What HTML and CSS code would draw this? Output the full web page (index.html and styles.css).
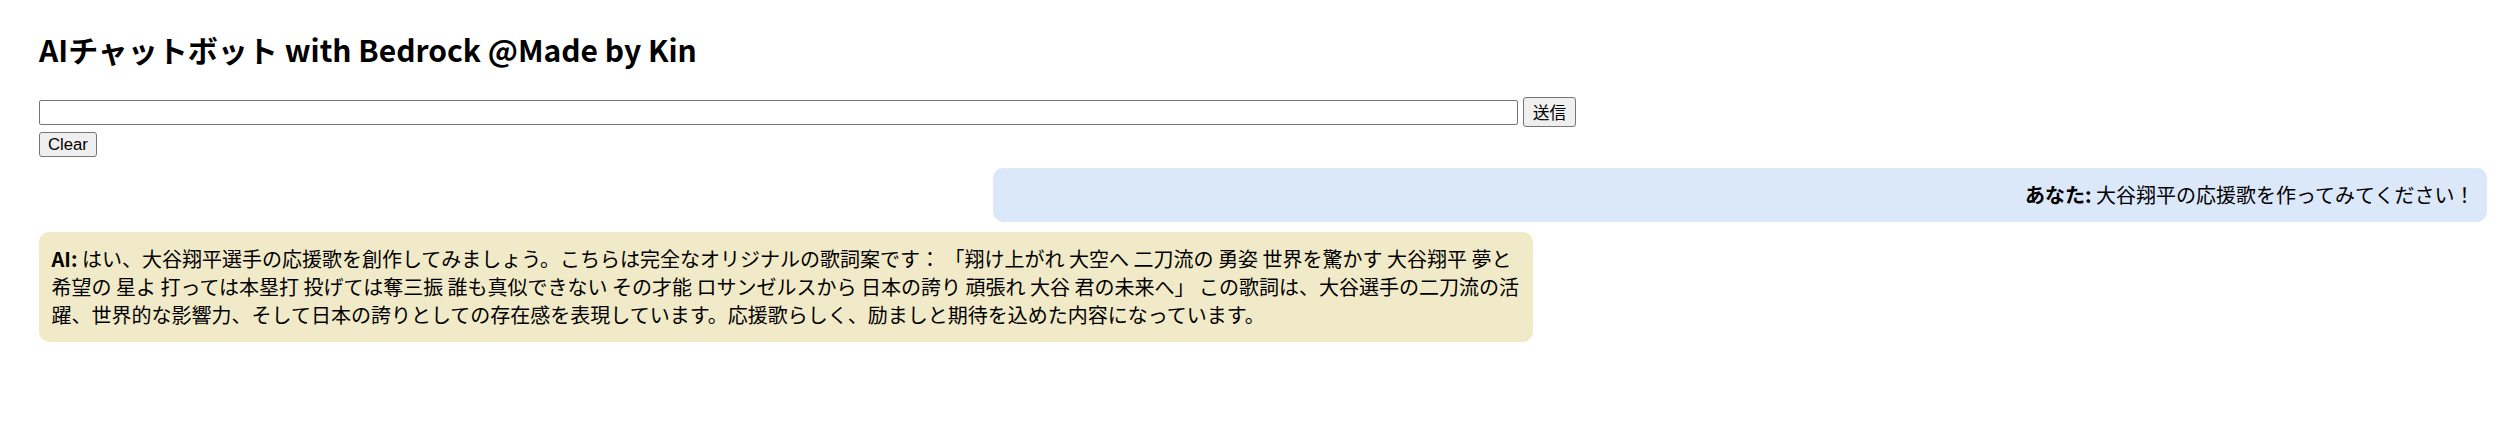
FILE: index.html
```html
<!DOCTYPE html>
<html>
<head>
    <title>AIチャットボット with Bedrock</title>
    <link rel="stylesheet" href="styles.css">
</head>
<body>
    <div class="container">
        <h1>AIチャットボット with Bedrock @Made by Kin</h1>

        <div class="form-row">
            <input type="text" id="userInput">
            <button class="send-btn">送信</button>
        </div>
        <div class="clear-row">
            <button class="clear-btn">Clear</button>
        </div>

        <div id="chat" class="chat">
            <div class="message user">
                <strong>あなた:</strong> 大谷翔平の応援歌を作ってみてください！
            </div>
            <div class="message ai">
                <strong>AI:</strong> はい、大谷翔平選手の応援歌を創作してみましょう。こちらは完全なオリジナルの歌詞案です： 「翔け上がれ 大空へ 二刀流の 勇姿 世界を驚かす 大谷翔平 夢と 希望の 星よ 打っては本塁打 投げては奪三振 誰も真似できない その才能 ロサンゼルスから 日本の誇り 頑張れ 大谷 君の未来へ」 この歌詞は、大谷選手の二刀流の活躍、世界的な影響力、そして日本の誇りとしての存在感を表現しています。応援歌らしく、励ましと期待を込めた内容になっています。
            </div>
        </div>
    </div>
</body>
</html>
```

FILE: styles.css
```css
body {
    margin: 0;
    font-family: "Noto Sans CJK JP", sans-serif;
    font-size: 20px;
    color: #000;
    background: white;
}
.container {
    padding: 29px 33px 0 39px;
}
h1 {
    margin: 0 0 28px 0;
    font-size: 30px;
    line-height: 40px;
    font-weight: bold;
}
.form-row {
    display: flex;
    align-items: center;
    gap: 5px;
    height: 30px;
}
input {
    width: 60%;
    height: 21px;
    padding: 1px 4px;
    border: 1px solid #767676;
    border-radius: 2px;
    font-family: "Liberation Sans", Arial, sans-serif;
    font-size: 16.7px;
}
button {
    background-color: #efefef;
    border: 1px solid #767676;
    border-radius: 3px;
    color: #000;
    font-family: "Liberation Sans", Arial, "Noto Sans CJK JP", sans-serif;
    font-size: 16.7px;
    cursor: pointer;
}
.send-btn {
    height: 30px;
    padding: 0 9px;
}
.clear-row {
    margin-top: 5px;
}
.clear-btn {
    display: block;
    height: 25px;
    padding: 0 8px;
    line-height: 21px;
}
.chat {
    margin-top: 11px;
}
.message {
    max-width: 60%;
    padding: 13px 12.5px;
    margin-bottom: 10px;
    border-radius: 10px;
    line-height: 28px;
}
.user {
    margin-left: auto;
    background-color: #dbe8fa;
    text-align: right;
}
.ai {
    background-color: #f1eac8;
}
```
